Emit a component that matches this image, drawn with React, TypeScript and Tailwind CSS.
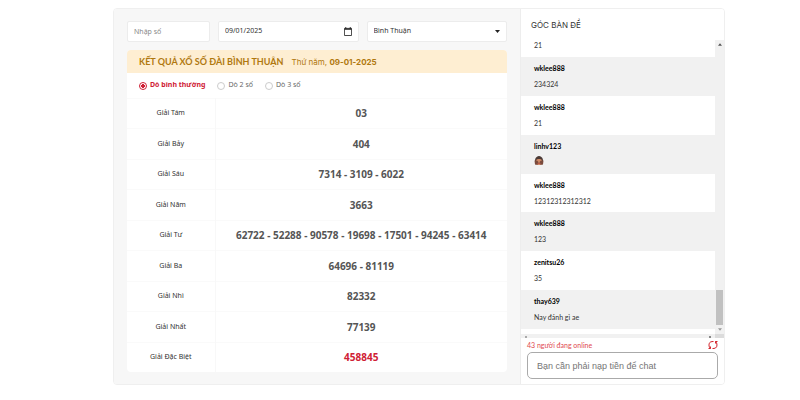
import { useState } from "react";

const prizes = [
  { name: "Giải Tám", value: "03" },
  { name: "Giải Bảy", value: "404" },
  { name: "Giải Sáu", value: "7314 - 3109 - 6022" },
  { name: "Giải Năm", value: "3663" },
  { name: "Giải Tư", value: "62722 - 52288 - 90578 - 19698 - 17501 - 94245 - 63414" },
  { name: "Giải Ba", value: "64696 - 81119" },
  { name: "Giải Nhì", value: "82332" },
  { name: "Giải Nhất", value: "77139" },
  { name: "Giải Đặc Biệt", value: "458845", special: true },
];

const messages = [
  { user: "wklee888", text: "234324" },
  { user: "wklee888", text: "21" },
  { user: "linhv123", emoji: true },
  { user: "wklee888", text: "12312312312312" },
  { user: "wklee888", text: "123" },
  { user: "zenitsu26", text: "35" },
  { user: "thay639", text: "Nay đánh gì ae" },
];

const modes = ["Dò bình thường", "Dò 2 số", "Dò 3 số"];

function MonkeyIcon() {
  return (
    <svg viewBox="0 0 20 18" className="h-[9px] w-[10px]" role="img" aria-label="Khỉ che mắt">
      <path d="M3 17 2 8C3 2 7 0 10 0s7 2 8 8l-1 9z" fill="#4b3a36" />
      <path d="M4 9c0-4 12-4 12 0l1 6c-2 4-12 4-14 0z" fill="#d08a66" />
      <path d="M1 9h5l3 3-1 5H2zM19 9h-5l-3 3 1 5h6z" fill="#7a4b3c" />
      <path d="M7 14h6v2H7z" fill="#b8584a" />
    </svg>
  );
}

function CalendarIcon() {
  return (
    <svg viewBox="0 0 18 20" className="h-[9px] w-[8px]" aria-hidden="true">
      <path d="M1 3h16v16H1z" fill="none" stroke="#333" strokeWidth="2" />
      <path d="M1 3h16v3H1zM3 0h2v4H3zM13 0h2v4h-2z" fill="#222" />
    </svg>
  );
}

function RefreshIcon() {
  return (
    <svg viewBox="0 0 20 20" className="h-[10px] w-[10px]" fill="none" stroke="#d3222a" strokeWidth="2" aria-hidden="true">
      <path d="M5 17C1 14 1 6 5 4c2-1 4-1 6-1M15 3c4 3 4 11 0 13-2 1-4 1-6 1" />
      <path d="M19 3h-4v4M1 17h4v-4" />
    </svg>
  );
}

function Results() {
  const [mode, setMode] = useState(0);
  return (
    <section className="min-w-0 flex-1 bg-[#f7f7f7] px-[13px] pt-3 pb-3 font-['Noto_Sans',sans-serif] text-[#333]">
      <div className="flex gap-2 text-[7px]">
        <input
          aria-label="Nhập số"
          placeholder="Nhập số"
          className="h-[21px] w-[83px] rounded-xs border border-[#ececec] bg-white px-[6px] outline-none placeholder:text-[#888]"
        />
        <div className="flex h-[21px] flex-1 items-center rounded-xs border border-[#ececec] bg-white px-[6px]">
          <input aria-label="Ngày" defaultValue="09/01/2025" className="min-w-0 flex-1 outline-none" />
          <button type="button" aria-label="Chọn ngày">
            <CalendarIcon />
          </button>
        </div>
        <div className="flex h-[21px] flex-1 items-center rounded-xs border border-[#ececec] bg-white px-[6px]">
          <select aria-label="Đài" className="min-w-0 flex-1 appearance-none outline-none">
            <option>Bình Thuận</option>
          </select>
          <svg viewBox="0 0 5 3" className="h-[3px] w-[5px]" aria-hidden="true">
            <path d="M0 0h5L2.500 3z" fill="#222" />
          </svg>
        </div>
      </div>
      <div className="mt-2 overflow-hidden rounded-sm bg-white">
        <div className="flex h-[23px] items-center gap-2 bg-[#feeed2] px-3 text-[#b0780f]">
          <h1 className="font-['Lato','Noto_Sans',sans-serif] text-[9px] font-bold whitespace-nowrap">KẾT QUẢ XỔ SỐ ĐÀI BÌNH THUẬN</h1>
          <p className="font-['Inter',sans-serif] text-[8px] whitespace-nowrap">
            Thứ năm, <b>09-01-2025</b>
          </p>
        </div>
        <fieldset className="flex h-[25px] items-center gap-3 px-3 text-[7px] text-[#666]">
          {modes.map((label, i) => (
            <label key={label} className={mode === i ? "flex items-center gap-[3px] font-bold text-[#cf2035]" : "flex items-center gap-[3px]"}>
              <input
                type="radio"
                name="mode"
                checked={mode === i}
                onChange={() => setMode(i)}
                className="size-2 appearance-none rounded-full border border-[#ccc] bg-white checked:border-[#cf2035] checked:bg-radial checked:from-[#cf2035] checked:from-40% checked:to-white checked:to-50%"
              />
              {label}
            </label>
          ))}
        </fieldset>
        <table className="h-[274px] w-full border-collapse text-center">
          <tbody>
            {prizes.map((p) => (
              <tr key={p.name} className="border-t border-[#fafafa]">
                <th scope="row" className="w-[88px] border-r border-[#f8f8f8] text-[7px] font-normal">
                  {p.name}
                </th>
                <td className={p.special ? "text-[10px] font-bold text-[#cf2035]" : "text-[10px] font-bold text-[#555]"}>{p.value}</td>
              </tr>
            ))}
          </tbody>
        </table>
      </div>
    </section>
  );
}

function Chat() {
  return (
    <aside className="flex w-[204px] flex-col border-l border-[#ededed] bg-white font-['Lato','Noto_Sans',sans-serif] text-[#333]">
      <h2 className="flex h-[31px] items-center px-[10px] font-['Inter',sans-serif] text-[8px]">GÓC BÀN ĐỀ</h2>
      <div className="flex">
        <div className="min-w-0 flex-1 text-[7px]">
          <p className="h-[17px] px-[13px] leading-[10px]">21</p>
          <ul className="grid h-[272px] grid-rows-7">
            {messages.map((m, i) => (
              <li key={i} className="px-[13px] pt-[5px] odd:bg-[#f1f1f1]">
                <p className="h-4 leading-[12px] font-bold text-black">{m.user}</p>
                <div className="leading-[12px]">{m.emoji ? <MonkeyIcon /> : m.text}</div>
              </li>
            ))}
          </ul>
          <div className="h-[5px]" />
        </div>
        <div className="flex w-[9px] flex-col items-center bg-[#f1f1f1]">
          <svg viewBox="0 0 5 3" className="mt-[3px] h-[3px] w-[4px]" aria-hidden="true">
            <path d="M0 3h5L2.500 0z" fill="#555" />
          </svg>
          <div className="mt-auto h-[35px] w-[7px] bg-[#c1c1c1]" />
          <svg viewBox="0 0 5 3" className="my-[3px] h-[3px] w-[4px]" aria-hidden="true">
            <path d="M0 0h5L2.500 3z" fill="#999" />
          </svg>
        </div>
      </div>
      <div className="flex h-1 items-end bg-[#f1f1f1]">
        <div className="flex flex-1 justify-between px-1">
          <span className="size-[2px] bg-[#aaa]" />
          <span className="size-[2px] bg-[#888]" />
        </div>
        <div className="h-full w-[9px] bg-[#dcdcdc]" />
      </div>
      <div className="px-[6px] pb-[5px]">
        <div className="flex h-[14px] items-center justify-between text-[7px] text-[#e0484f]">
          <p>43 người đang online</p>
          <button type="button" aria-label="Tải lại">
            <RefreshIcon />
          </button>
        </div>
        <input
          aria-label="Tin nhắn"
          placeholder="Bạn cần phải nạp tiền để chat"
          className="block h-[27px] w-full rounded-[5px] border border-[#aaa] px-[9px] font-['Liberation_Sans',sans-serif] text-[9px] outline-none placeholder:text-[#757575]"
        />
      </div>
    </aside>
  );
}

export default function App() {
  return (
    <main className="min-h-screen bg-white pt-2 pr-[75px] pl-[113px]">
      <div className="flex overflow-hidden rounded-sm border border-[#efefef]">
        <Results />
        <Chat />
      </div>
    </main>
  );
}
